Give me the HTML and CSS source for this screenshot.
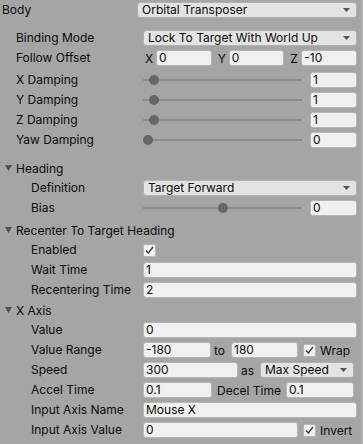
FILE: index.html
```html
<!DOCTYPE html>
<html>
<head>
<meta charset="utf-8">
<link rel="stylesheet" href="styles.css">
</head>
<body>
<div class="panel">
  <div class="row top l0">
    <span class="label">Body</span>
    <div class="dropdown">Orbital Transposer<svg class="arrow" width="7" height="4" viewBox="0 0 7 4"><polygon points="0,0 7,0 3.5,4"/></svg></div>
  </div>

  <div class="row l1 mt8">
    <span class="label">Binding Mode</span>
    <div class="dropdown">Lock To Target With World Up<svg class="arrow" width="7" height="4" viewBox="0 0 7 4"><polygon points="0,0 7,0 3.5,4"/></svg></div>
  </div>
  <div class="row l1">
    <span class="label">Follow Offset</span>
    <div class="vec">
      <div class="seg"><span class="axis">X</span><div class="field">0</div></div>
      <div class="seg"><span class="axis">Y</span><div class="field">0</div></div>
      <div class="seg"><span class="axis">Z</span><div class="field">-10</div></div>
    </div>
  </div>
  <div class="row l1 mt2">
    <span class="label">X Damping</span>
    <div class="slider"><div class="track"><span class="thumb" style="left:6px"></span></div><div class="field num">1</div></div>
  </div>
  <div class="row l1">
    <span class="label">Y Damping</span>
    <div class="slider"><div class="track"><span class="thumb" style="left:6px"></span></div><div class="field num">1</div></div>
  </div>
  <div class="row l1">
    <span class="label">Z Damping</span>
    <div class="slider"><div class="track"><span class="thumb" style="left:6px"></span></div><div class="field num">1</div></div>
  </div>
  <div class="row l1">
    <span class="label">Yaw Damping</span>
    <div class="slider"><div class="track"><span class="thumb" style="left:0px"></span></div><div class="field num">0</div></div>
  </div>

  <div class="fold mt8"><svg class="tri" width="7" height="6" viewBox="0 0 7 6"><polygon points="0,0 7,0 3.5,6"/></svg><span>Heading</span></div>
  <div class="row l2">
    <span class="label">Definition</span>
    <div class="dropdown">Target Forward<svg class="arrow" width="7" height="4" viewBox="0 0 7 4"><polygon points="0,0 7,0 3.5,4"/></svg></div>
  </div>
  <div class="row l2">
    <span class="label">Bias</span>
    <div class="slider"><div class="track"><span class="thumb" style="left:75px"></span></div><div class="field num">0</div></div>
  </div>

  <div class="fold mt2"><svg class="tri" width="7" height="6" viewBox="0 0 7 6"><polygon points="0,0 7,0 3.5,6"/></svg><span>Recenter To Target Heading</span></div>
  <div class="row l2">
    <span class="label">Enabled</span>
    <div class="ctl"><span class="check"><svg width="9" height="8" viewBox="0 0 9 8"><polyline points="1,4.5 3.3,7 8,1"/></svg></span></div>
  </div>
  <div class="row l2">
    <span class="label">Wait Time</span>
    <div class="field">1</div>
  </div>
  <div class="row l2">
    <span class="label">Recentering Time</span>
    <div class="field">2</div>
  </div>

  <div class="fold"><svg class="tri" width="7" height="6" viewBox="0 0 7 6"><polygon points="0,0 7,0 3.5,6"/></svg><span>X Axis</span></div>
  <div class="row l2">
    <span class="label">Value</span>
    <div class="field">0</div>
  </div>
  <div class="row l2">
    <span class="label">Value Range</span>
    <div class="ctl">
      <div class="field w68">-180</div>
      <span class="inl to">to</span>
      <div class="field w67">180</div>
      <span class="check ml5"><svg width="9" height="8" viewBox="0 0 9 8"><polyline points="1,4.5 3.3,7 8,1"/></svg></span>
      <span class="inl after">Wrap</span>
    </div>
  </div>
  <div class="row l2">
    <span class="label">Speed</span>
    <div class="ctl">
      <div class="field w95">300</div>
      <span class="inl as">as</span>
      <div class="dropdown w94">Max Speed<svg class="arrow" width="7" height="4" viewBox="0 0 7 4"><polygon points="0,0 7,0 3.5,4"/></svg></div>
    </div>
  </div>
  <div class="row l2">
    <span class="label">Accel Time</span>
    <div class="ctl">
      <div class="field w69">0.1</div>
      <span class="inl decel">Decel Time</span>
      <div class="field w68">0.1</div>
    </div>
  </div>
  <div class="row l2">
    <span class="label">Input Axis Name</span>
    <div class="field">Mouse X</div>
  </div>
  <div class="row l2">
    <span class="label">Input Axis Value</span>
    <div class="ctl">
      <div class="field w155">0</div>
      <span class="check ml5"><svg width="9" height="8" viewBox="0 0 9 8"><polyline points="1,4.5 3.3,7 8,1"/></svg></span>
      <span class="inl after">Invert</span>
    </div>
  </div>
</div>
</body>
</html>
```

FILE: styles.css
```css
html, body {
  margin: 0;
  padding: 0;
}
body {
  background: #a5a5a5;
  font-family: Inter, "Noto Sans", sans-serif;
  font-size: 12px;
  color: #0b0b0b;
  width: 363px;
  height: 444px;
  overflow: hidden;
}
.panel {
  width: 361px;
  height: 444px;
  border-right: 2px solid #b3b3b3;
}
.row {
  display: grid;
  grid-template-columns: 143px 1fr;
  height: 20px;
  align-items: center;
  padding-right: 4px;
}
.row.top {
  grid-template-columns: 137px 1fr;
}
.mt8 { margin-top: 8px; }
.mt2 { margin-top: 2px; }
.label {
  white-space: nowrap;
  line-height: 20px;
}
.l0 .label { padding-left: 2px; }
.l1 .label { padding-left: 16px; }
.l2 .label { padding-left: 31px; }

.fold {
  display: flex;
  align-items: center;
  height: 20px;
}
.tri {
  margin-left: 5px;
  margin-right: 4px;
  fill: #505050;
}

.field {
  height: 16px;
  box-sizing: border-box;
  background: #f0f0f0;
  border: 1px solid #b6b6b6;
  border-radius: 3px;
  padding-left: 2px;
  line-height: 14px;
  white-space: nowrap;
  overflow: hidden;
}
.dropdown {
  position: relative;
  height: 16px;
  box-sizing: border-box;
  background: #e3e3e3;
  border: 1px solid #b0b0b0;
  border-radius: 3px;
  padding-left: 4px;
  line-height: 14px;
  white-space: nowrap;
}
.arrow {
  position: absolute;
  right: 6px;
  top: 5px;
  fill: #555555;
}

.vec {
  display: flex;
  gap: 4px;
}
.seg {
  flex: 1;
  display: flex;
  align-items: center;
  min-width: 0;
}
.axis {
  width: 11px;
  padding-left: 2px;
  flex: none;
}
.seg .field {
  flex: 1;
  min-width: 0;
}

.slider {
  display: flex;
  align-items: center;
}
.track {
  position: relative;
  flex: 1;
  height: 2px;
  background: #8b8b8b;
}
.thumb {
  position: absolute;
  top: -4px;
  width: 10px;
  height: 10px;
  border-radius: 50%;
  background: #666666;
}
.num {
  width: 47px;
  margin-left: 8px;
  flex: none;
}

.ctl {
  display: flex;
  align-items: center;
}
.check {
  display: flex;
  align-items: center;
  justify-content: center;
  width: 13px;
  height: 13px;
  box-sizing: border-box;
  background: #f0f0f0;
  border: 1px solid #b6b6b6;
  border-radius: 2px;
  flex: none;
}
.check svg {
  fill: none;
  stroke: #3c3c3c;
  stroke-width: 1.4;
}
.ml5 { margin-left: 5px; }
.inl {
  white-space: nowrap;
  flex: none;
}
.to { width: 20px; padding-left: 3px; box-sizing: border-box; }
.as { width: 22px; padding-left: 3px; box-sizing: border-box; }
.decel { width: 74px; padding-left: 5px; box-sizing: border-box; }
.after { padding-left: 4px; }
.w68 { width: 68px; flex: none; }
.w67 { width: 67px; flex: none; }
.w69 { width: 69px; flex: none; }
.w95 { width: 95px; flex: none; }
.w94 { width: 94px; flex: none; }
.w155 { width: 155px; flex: none; }
```
